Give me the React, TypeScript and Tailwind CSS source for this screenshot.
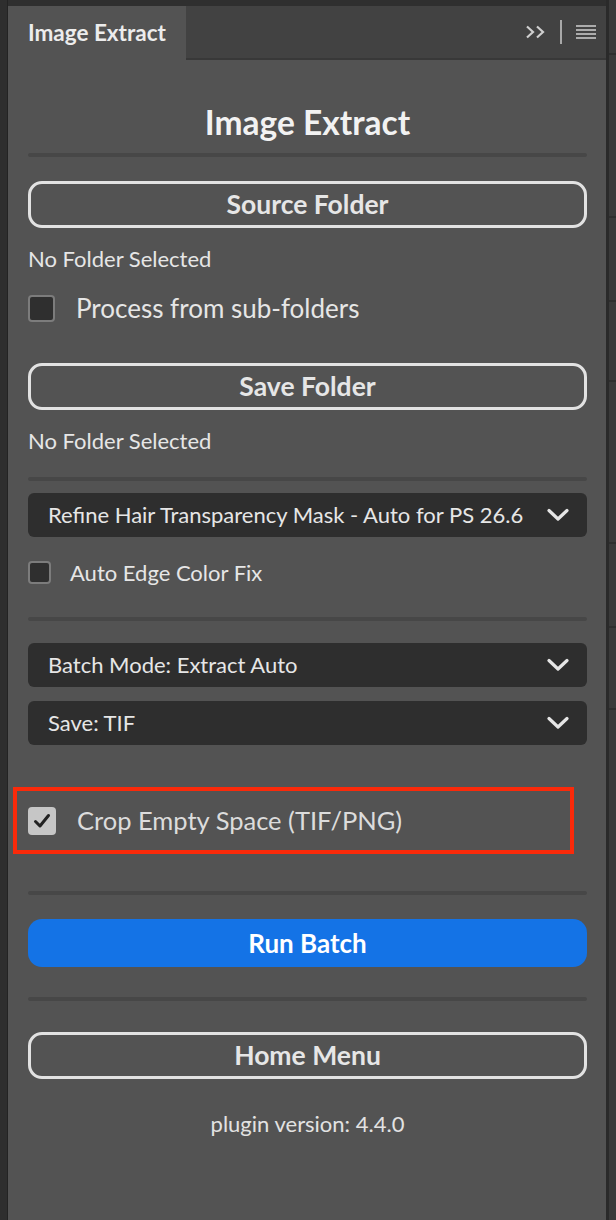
import React from "react";

const FONT = { fontFamily: "Lato, 'Open Sans', sans-serif" };

function Divider({ className = "" }: { className?: string }) {
  return <div className={`h-[4px] rounded-full bg-[#474747] ${className}`} />;
}

function OutlineButton({ label, className = "" }: { label: string; className?: string }) {
  return (
    <button
      className={`flex h-[47px] w-full items-center justify-center rounded-[14px] border-[3px] border-[#e2e2e2] text-[26.5px] font-bold leading-none text-[#e6e6e6] ${className}`}
    >
      {label}
    </button>
  );
}

function Chevron() {
  return (
    <svg width="22" height="14" viewBox="0 0 22 14" fill="none">
      <path d="M2 2.5 L11 11 L20 2.5" stroke="#e6e6e6" strokeWidth="3.2" strokeLinecap="round" strokeLinejoin="round" />
    </svg>
  );
}

function Dropdown({ label, className = "" }: { label: string; className?: string }) {
  return (
    <div
      className={`flex h-[44px] items-center justify-between rounded-[6px] bg-[#2e2e2e] pl-[20px] pr-[18px] text-[22px] leading-none text-[#e6e6e6] ${className}`}
    >
      <span>{label}</span>
      <Chevron />
    </div>
  );
}

function Checkbox({ checked, size }: { checked?: boolean; size: number }) {
  if (checked) {
    return (
      <div
        className="flex items-center justify-center rounded-[4px] bg-[#c6c6c6]"
        style={{ width: size, height: size }}
      >
        <svg width="18" height="16" viewBox="0 0 18 16" fill="none">
          <path d="M2.5 8.5 L7 13 L15.5 2.5" stroke="#222" strokeWidth="3" strokeLinecap="round" strokeLinejoin="round" />
        </svg>
      </div>
    );
  }
  return (
    <div
      className="rounded-[4px] border-[2px] border-[#7c7c7c] bg-[#2f2f2f]"
      style={{ width: size, height: size }}
    />
  );
}

export default function App() {
  return (
    <div className="flex h-[1220px] w-[616px] bg-[#2c2c2c] text-[#e6e6e6]" style={FONT}>
      <div className="w-[8px] border-r border-[#232323] bg-[#2e2e2e]" />
      <div className="flex w-[598px] flex-col">
        <div className="h-[6px] bg-[#2f2f2f]" />
        {/* tab bar */}
        <div className="flex h-[54px] bg-[#424242]">
          <div className="flex w-[178px] items-center bg-[#535353] pl-[20px] text-[22.5px] font-bold text-[#ececec]">
            Image Extract
          </div>
          <div className="flex flex-1 items-center justify-end border-b-[2px] border-[#383838] pr-[10px]">
            <svg width="22" height="14" viewBox="0 0 22 14" fill="none" className="mr-[13px]">
              <path d="M2 1.5 L8 7 L2 12.5 M12 1.5 L18 7 L12 12.5" stroke="#cfcfcf" strokeWidth="2.2" />
            </svg>
            <div className="mr-[14px] h-[24px] w-[2px] bg-[#a8a8a8]" />
            <svg width="20" height="14" viewBox="0 0 20 14">
              <rect x="0" y="0" width="20" height="2" fill="#acacac" />
              <rect x="0" y="4" width="20" height="2" fill="#acacac" />
              <rect x="0" y="8" width="20" height="2" fill="#acacac" />
              <rect x="0" y="12" width="20" height="2" fill="#acacac" />
            </svg>
          </div>
        </div>

        {/* panel body */}
        <div className="flex flex-1 flex-col bg-[#535353] pl-[20px] pr-[19px]">
          <h1 className="mt-[44px] h-[36px] text-center text-[33.5px] font-bold leading-[36px] text-[#f2f2f2]">
            Image Extract
          </h1>
          <Divider className="mt-[13px]" />

          <OutlineButton label="Source Folder" className="mt-[24px]" />
          <div className="mt-[19px] h-[24px] text-[22px] leading-[24px]">No Folder Selected</div>
          <div className="mt-[23px] flex h-[28px] items-center gap-[21px]">
            <Checkbox size={27} />
            <span className="text-[26px] leading-none">Process from sub-folders</span>
          </div>

          <OutlineButton label="Save Folder" className="mt-[41px]" />
          <div className="mt-[19px] h-[24px] text-[22px] leading-[24px]">No Folder Selected</div>

          <Divider className="mt-[24px]" />
          <Dropdown label="Refine Hair Transparency Mask - Auto for PS 26.6" className="mt-[12px]" />
          <div className="mt-[24px] flex h-[23px] items-center gap-[19px]">
            <Checkbox size={23} />
            <span className="text-[22px] leading-none">Auto Edge Color Fix</span>
          </div>

          <Divider className="mt-[33px]" />
          <Dropdown label="Batch Mode: Extract Auto" className="mt-[22px]" />
          <Dropdown label="Save: TIF" className="mt-[14px]" />

          <div className="ml-[-15px] mr-[13px] mt-[42px] flex h-[67px] items-center border-[4px] border-[#fa2a0a] pl-[11px]">
            <div className="flex items-center gap-[21px]">
              <Checkbox checked size={28} />
              <span className="text-[25.5px] leading-none text-[#dcdcdc]">Crop Empty Space (TIF/PNG)</span>
            </div>
          </div>

          <Divider className="mt-[37px]" />
          <button className="mt-[24px] flex h-[48px] w-full items-center justify-center rounded-[14px] bg-[#1473e6] text-[26px] font-bold leading-none text-white">
            Run Batch
          </button>
          <Divider className="mt-[30px]" />

          <OutlineButton label="Home Menu" className="mt-[31px]" />
          <div className="mt-[33px] h-[24px] text-center text-[22px] leading-[24px] text-[#e2e2e2]">
            plugin version: 4.4.0
          </div>
        </div>
      </div>
      <div className="flex w-[10px] flex-col border-l-[3px] border-[#2a2a2a] bg-[#3a3a3a]">
        <div className="h-[53px]" />
        <div className="h-[2px] bg-[#2e2e2e]" />
        <div className="h-[161px]" />
        <div className="h-[2px] bg-[#2e2e2e]" />
        <div className="h-[82px]" />
        <div className="h-[2px] bg-[#2e2e2e]" />
        <div className="h-[78px]" />
        <div className="h-[2px] bg-[#2e2e2e]" />
        <div className="h-[160px]" />
        <div className="h-[2px] bg-[#2e2e2e]" />
        <div className="h-[82px]" />
        <div className="h-[2px] bg-[#2e2e2e]" />
        <div className="h-[80px]" />
        <div className="h-[2px] bg-[#2e2e2e]" />
      </div>
    </div>
  );
}
